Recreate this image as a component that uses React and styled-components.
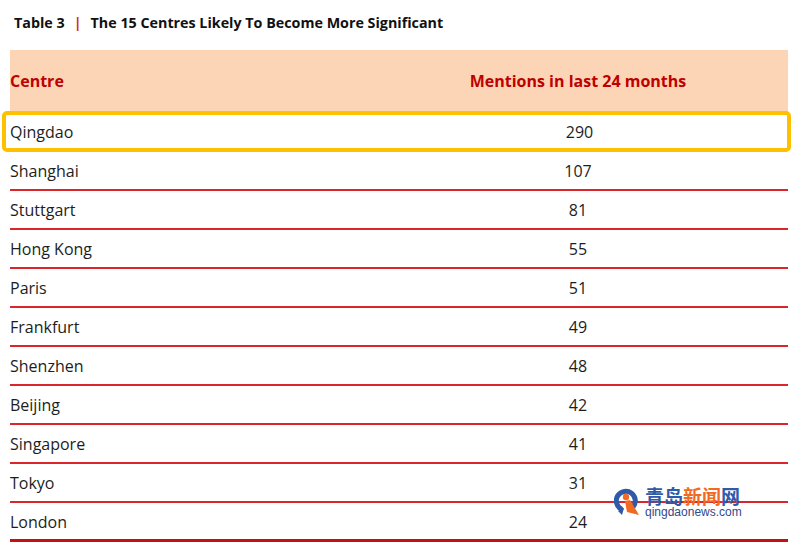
import React from "react";
import styled, { createGlobalStyle } from "styled-components";

const GlobalStyle = createGlobalStyle`
  body {
    margin: 0;
    background: #fff;
    font-family: "Open Sans", "Liberation Sans", sans-serif;
    color: #1d1d1d;
  }
`;

const rows = [
  ["Shanghai", 107],
  ["Stuttgart", 81],
  ["Hong Kong", 55],
  ["Paris", 51],
  ["Frankfurt", 49],
  ["Shenzhen", 48],
  ["Beijing", 42],
  ["Singapore", 41],
  ["Tokyo", 31],
  ["London", 24],
];

const Page = styled.div`
  position: relative;
  width: 800px;
  height: 549px;
  padding: 0 12px 0 10px;
  box-sizing: border-box;
  overflow: hidden;
`;

const Title = styled.div`
  display: flex;
  align-items: center;
  gap: 9px;
  height: 50px;
  padding: 0 0 6px 4px;
  box-sizing: border-box;
  font-size: 14.3px;
  font-weight: 700;
  color: #111;
`;

const Bar = styled.span`
  color: #d8262b;
  font-weight: 700;
`;

const Table = styled.div`
  width: 778px;
  display: flex;
  flex-direction: column;
`;

const HeaderRow = styled.div`
  display: grid;
  grid-template-columns: 358px 1fr;
  align-items: center;
  height: 62px;
  background: #fbd5b5;
  color: #c00000;
  font-size: 16px;
  font-weight: 700;
`;

const Row = styled.div`
  display: grid;
  grid-template-columns: 358px 1fr;
  align-items: center;
  height: 39px;
  box-sizing: border-box;
  padding-top: ${(p) => (p.$last ? "2px" : "0")};
  border-bottom: ${(p) => (p.$last ? "3px solid #c41010" : "2px solid #d8262b")};
  font-size: 16px;
`;

const HighlightRow = styled.div`
  display: grid;
  grid-template-columns: 362px 1fr;
  align-items: center;
  height: 41px;
  margin: -1px -3px 0 -8px;
  padding-left: 4px;
  box-sizing: border-box;
  border: 4px solid #ffc000;
  border-radius: 5px;
  font-size: 16px;
`;

const Num = styled.span`
  text-align: center;
`;

const Logo = styled.div`
  position: absolute;
  left: 614px;
  top: 486px;
  display: flex;
  align-items: center;
  gap: 5px;
`;

const LogoText = styled.div`
  display: flex;
  flex-direction: column;
`;

const Cn = styled.div`
  font-family: "Noto Sans CJK SC", sans-serif;
  font-size: 19px;
  line-height: 19px;
  font-weight: 700;
  color: #2f5aa8;
`;

const Orange = styled.span`
  color: #f26a21;
`;

const Domain = styled.div`
  font-family: "Liberation Sans", Arial, sans-serif;
  font-size: 12px;
  line-height: 12px;
  color: #34498a;
  margin-top: 1px;
`;

function LogoIcon() {
  return (
    <svg width="26" height="30" viewBox="0 0 26 30">
      <path
        d="M19 20 A9.5 9.5 0 1 0 7 22"
        fill="none"
        stroke="#2f5aa8"
        strokeWidth="5"
        strokeLinecap="round"
      />
      <path d="M4 24 L10 21 L8 28 Z" fill="#2f5aa8" />
      <circle cx="12" cy="10" r="3.2" fill="#f26a21" />
      <path d="M11 14 L16 13 L25 28 L13 25 Z" fill="#f26a21" />
    </svg>
  );
}

export default function App() {
  return (
    <Page>
      <GlobalStyle />
      <Title>
        <span>Table 3</span>
        <Bar>|</Bar>
        <span>The 15 Centres Likely To Become More Significant</span>
      </Title>
      <Table>
        <HeaderRow>
          <span>Centre</span>
          <Num>Mentions in last 24 months</Num>
        </HeaderRow>
        <HighlightRow>
          <span>Qingdao</span>
          <Num>290</Num>
        </HighlightRow>
        {rows.map(([name, n], i) => (
          <Row key={name} $last={i === rows.length - 1}>
            <span>{name}</span>
            <Num>{n}</Num>
          </Row>
        ))}
      </Table>
      <Logo>
        <LogoIcon />
        <LogoText>
          <Cn>
            青岛<Orange>新闻</Orange>网
          </Cn>
          <Domain>qingdaonews.com</Domain>
        </LogoText>
      </Logo>
    </Page>
  );
}
